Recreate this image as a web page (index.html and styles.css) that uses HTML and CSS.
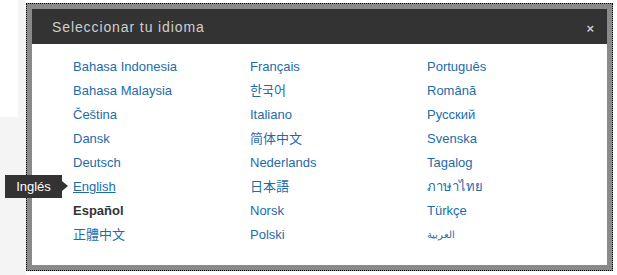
FILE: index.html
```html
<!DOCTYPE html>
<html>

<head>
    <meta charset="UTF-8">
    <title>Seleccionar tu idioma</title>
    <link rel="stylesheet" href="styles.css">
</head>

<body>
    <div class="page">
        <div class="side">
            <div class="side_top"></div>
        </div>
        <div class="dialog">
            <div class="frame">
                <div class="head">
                    <span class="title">Seleccionar tu idioma</span>
                    <span class="close">&times;</span>
                </div>
                <div class="langs">
                    <a href="#">Bahasa Indonesia</a>
                    <a href="#">Bahasa Malaysia</a>
                    <a href="#">Čeština</a>
                    <a href="#">Dansk</a>
                    <a href="#">Deutsch</a>
                    <a href="#" class="hover">English</a>
                    <span class="current">Español</span>
                    <a href="#" lang="zh-TW">正體中文</a>
                    <a href="#">Français</a>
                    <a href="#" lang="ko">한국어</a>
                    <a href="#">Italiano</a>
                    <a href="#" lang="zh-CN">简体中文</a>
                    <a href="#">Nederlands</a>
                    <a href="#" lang="ja">日本語</a>
                    <a href="#">Norsk</a>
                    <a href="#">Polski</a>
                    <a href="#">Português</a>
                    <a href="#">Română</a>
                    <a href="#">Русский</a>
                    <a href="#">Svenska</a>
                    <a href="#">Tagalog</a>
                    <a href="#">ภาษาไทย</a>
                    <a href="#">Türkçe</a>
                    <a href="#" class="arabic">العربية</a>
                </div>
            </div>
        </div>
    </div>
    <!--鼠标悬停提示-->
    <div class="tip">Inglés</div>
</body>

</html>
```

FILE: styles.css
```css
body {
    margin: 0;
    background-color: #FFF;
    font-family: "Liberation Sans", Arial, "Noto Sans CJK SC", sans-serif;
}

.page {
    display: flex;
    height: 275px;
}

.side {
    width: 26px;
    background-color: #F4F4F4;
}

.side_top {
    width: 18px;
    height: 117px;
    background-color: #FFF;
}

.dialog {
    margin-top: 3px;
    border: 1px dotted #000;
    background-color: #8A8A8A;
    padding: 5px;
    width: 575px;
    height: 256px;
}

.frame {
    background-color: #FFF;
    height: 256px;
}

.head {
    display: flex;
    justify-content: space-between;
    align-items: center;
    height: 35px;
    padding: 0 13px 0 20px;
    background-color: #333;
}

.title {
    color: #CFCFCF;
    font-size: 14px;
    letter-spacing: 0.9px;
    padding-top: 1px;
}

.close {
    color: #C8C8C8;
    font-size: 13px;
    font-weight: bold;
    padding-top: 4px;
}

.langs {
    display: grid;
    grid-template-columns: 177px 177px 177px;
    grid-template-rows: repeat(8, 24px);
    grid-auto-flow: column;
    padding: 11px 0 0 41px;
    font-size: 13px;
    line-height: 24px;
}

.langs a {
    color: #1D6BAA;
    text-decoration: none;
    justify-self: start;
}

.langs a.hover {
    text-decoration: underline;
}

.langs .current {
    color: #333;
    font-weight: bold;
}

.langs .arabic {
    font-size: 10px;
}

.tip {
    position: absolute;
    left: 5px;
    top: 175px;
    width: 57px;
    height: 23px;
    line-height: 23px;
    text-align: center;
    background-color: #333;
    color: #FFF;
    font-size: 13px;
}

.tip::after {
    content: "";
    position: absolute;
    right: -6px;
    top: 6px;
    border-style: solid;
    border-width: 5px 0 5px 6px;
    border-color: transparent transparent transparent #333;
}
```
